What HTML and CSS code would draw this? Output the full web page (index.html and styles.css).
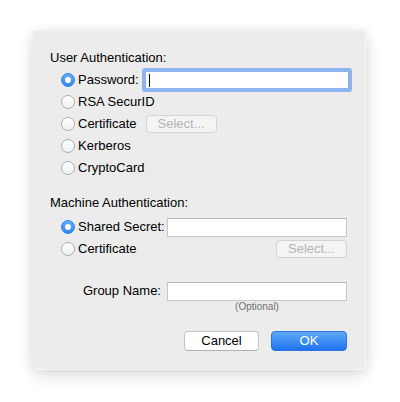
FILE: index.html
```html
<!DOCTYPE html>
<html>
<head>
<meta charset="utf-8">
<link rel="stylesheet" href="styles.css">
</head>
<body>
<div class="dialog">
  <div class="title">User Authentication:</div>
  <div class="options">
    <div class="row">
      <span class="radio on"></span><span class="lbl">Password:</span>
      <span class="field focus pw"><span class="caret"></span></span>
    </div>
    <div class="row"><span class="radio"></span><span class="lbl">RSA SecurID</span></div>
    <div class="row">
      <span class="radio"></span><span class="lbl">Certificate</span>
      <span class="btn disabled usel">Select...</span>
    </div>
    <div class="row"><span class="radio"></span><span class="lbl">Kerberos</span></div>
    <div class="row"><span class="radio"></span><span class="lbl">CryptoCard</span></div>
  </div>

  <div class="title t2">Machine Authentication:</div>
  <div class="options o2">
    <div class="row">
      <span class="radio on"></span><span class="lbl">Shared Secret:</span>
      <span class="field wide push"></span>
    </div>
    <div class="row">
      <span class="radio"></span><span class="lbl">Certificate</span>
      <span class="btn disabled msel push">Select...</span>
    </div>
  </div>

  <div class="group">
    <span class="glbl">Group Name:</span>
    <span class="field wide"></span>
  </div>
  <div class="optional">(Optional)</div>

  <div class="actions">
    <span class="btn cancel">Cancel</span>
    <span class="btn ok">OK</span>
  </div>
</div>
</body>
</html>
```

FILE: styles.css
```css
html, body {
  margin: 0;
  padding: 0;
  background: #ffffff;
}
body {
  font-family: "Liberation Sans", Arial, sans-serif;
  font-size: 13px;
  color: #000000;
  width: 400px;
  height: 402px;
  overflow: hidden;
}
.dialog {
  box-sizing: border-box;
  width: 333px;
  margin: 31px 0 0 33px;
  padding: 19px 18px 18px 17px;
  background: #ececec;
  border-right: 1px solid #f7f7f7;
  border-bottom: 1px solid #f7f7f7;
  box-shadow: 0 6px 16px rgba(0, 0, 0, 0.12), 0 0 12px rgba(0, 0, 0, 0.07);
  border-radius: 0 0 6px 6px;
}
.title {
  line-height: 16px;
  height: 16px;
}
.t2 {
  margin-top: 16px;
}
.options {
  margin-top: 3px;
  padding-left: 11px;
}
.o2 {
  margin-top: 5px;
}
.row {
  display: flex;
  align-items: center;
  height: 22px;
}
.radio {
  box-sizing: border-box;
  width: 14px;
  height: 14px;
  border-radius: 50%;
  border: 1px solid #adadad;
  background: linear-gradient(#ffffff, #f0f0f0);
  margin-right: 3px;
  flex: none;
  display: flex;
  align-items: center;
  justify-content: center;
}
.radio.on {
  border-color: #2f83f2;
  background: linear-gradient(#62acfa, #2f86f6);
}
.radio.on::after {
  content: "";
  width: 6px;
  height: 6px;
  border-radius: 50%;
  background: #ffffff;
}
.lbl {
  white-space: nowrap;
  line-height: 16px;
}
.field {
  box-sizing: border-box;
  display: block;
  background: #ffffff;
  border: 1px solid #c6c6c6;
  border-top-color: #bababa;
  height: 19px;
  flex: none;
  position: relative;
}
.field.pw {
  width: 204px;
  height: 18px;
  margin-left: 6px;
  border-color: #8fb3e8;
  box-shadow: 0 0 0 3px #8cb6f1;
  border-radius: 1px;
}
.caret {
  position: absolute;
  left: 3px;
  top: 2px;
  width: 1px;
  height: 13px;
  background: #000000;
}
.field.wide {
  width: 180px;
}
.push {
  margin-left: auto;
}
.btn {
  box-sizing: border-box;
  display: flex;
  align-items: center;
  justify-content: center;
  height: 19px;
  border-radius: 4px;
  flex: none;
  line-height: 16px;
}
.btn.disabled {
  width: 71px;
  height: 18px;
  border: 1px solid #d3d3d3;
  background: #f4f4f4;
  color: #b4b4b4;
}
.usel {
  margin-left: 9px;
}
.group {
  display: flex;
  align-items: center;
  justify-content: flex-end;
  margin-top: 21px;
  height: 20px;
}
.glbl {
  margin-right: 6px;
  line-height: 16px;
}
.optional {
  width: 180px;
  margin-left: auto;
  text-align: center;
  font-size: 10px;
  line-height: 12px;
  height: 12px;
  color: #707070;
}
.actions {
  display: flex;
  justify-content: flex-end;
  gap: 12px;
  margin-top: 18px;
}
.cancel {
  width: 75px;
  height: 20px;
  background: #ffffff;
  border: 1px solid #c4c4c4;
  border-bottom-color: #b0b0b0;
  color: #000000;
}
.ok {
  width: 76px;
  height: 20px;
  background: linear-gradient(#5ea9f9, #1f73ef);
  border: 1px solid #2b72e6;
  color: #ffffff;
}
```
